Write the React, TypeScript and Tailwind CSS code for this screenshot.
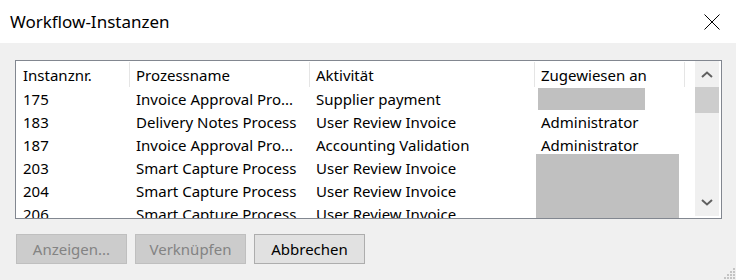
import React from 'react';

type Row = { id: string; process: string; activity: string; assignee?: string; hidden?: boolean };

const rows: Row[] = [
  { id: '175', process: 'Invoice Approval Pro...', activity: 'Supplier payment', hidden: true },
  { id: '183', process: 'Delivery Notes Process', activity: 'User Review Invoice', assignee: 'Administrator' },
  { id: '187', process: 'Invoice Approval Pro...', activity: 'Accounting Validation', assignee: 'Administrator' },
  { id: '203', process: 'Smart Capture Process', activity: 'User Review Invoice' },
  { id: '204', process: 'Smart Capture Process', activity: 'User Review Invoice' },
  { id: '206', process: 'Smart Capture Process', activity: 'User Review Invoice' },
];

function Chevron({ up }: { up?: boolean }) {
  return (
    <svg width="12" height="7" viewBox="0 0 12 7" className="block">
      <path
        d={up ? 'M1 6 L6 1.5 L11 6' : 'M1 1 L6 5.5 L11 1'}
        fill="none"
        stroke="#606060"
        strokeWidth="2"
      />
    </svg>
  );
}

function Grip() {
  const dots = [
    [9, 0], [6, 3], [9, 3], [3, 6], [6, 6], [9, 6], [0, 9], [3, 9], [6, 9], [9, 9],
  ];
  return (
    <svg width="11" height="11" viewBox="0 0 11 11" className="absolute right-[1px] bottom-[1px]">
      {dots.map(([x, y], i) => (
        <rect key={i} x={x} y={y} width="2" height="2" fill="#c4c4c4" />
      ))}
    </svg>
  );
}

export default function App() {
  return (
    <div
      className="relative w-[736px] h-[280px] bg-[#f0f0f0] text-black overflow-hidden"
      style={{ fontFamily: '"Noto Sans", "Open Sans", sans-serif' }}
    >
      {/* title bar */}
      <div className="h-[43px] bg-white flex items-center justify-between pl-[10px] pr-[16px]">
        <span className="text-[17px] leading-none -mt-[1px]">Workflow-Instanzen</span>
        <svg width="16" height="16" viewBox="0 0 16 16" className="block">
          <path d="M0.5 0.5 L15.5 15.5 M15.5 0.5 L0.5 15.5" stroke="#000" strokeWidth="1" />
        </svg>
      </div>

      {/* list */}
      <div className="pl-[15px] pt-[17px]">
        <div className="w-[707px] h-[159px] border border-[#828790] bg-white flex overflow-hidden">
          <div className="relative w-[679px] overflow-hidden text-[15px]">
            <div className="flex h-[27px] items-stretch">
              <div className="w-[114px] pl-[7px] leading-[27px] border-r border-[#e5e5e5] my-[1px]">Instanznr.</div>
              <div className="w-[180px] pl-[6px] leading-[27px] border-r border-[#e5e5e5] my-[1px]">Prozessname</div>
              <div className="w-[225px] pl-[6px] leading-[27px] border-r border-[#e5e5e5] my-[1px]">Aktivität</div>
              <div className="w-[150px] pl-[6px] leading-[27px] border-r border-[#e5e5e5] my-[1px]">Zugewiesen an</div>
            </div>
            {rows.map((r) => (
              <div key={r.id} className="flex h-[23px] leading-[23px] whitespace-nowrap">
                <div className="w-[114px] pl-[7px]">{r.id}</div>
                <div className="w-[180px] pl-[6px] overflow-hidden">{r.process}</div>
                <div className="w-[225px] pl-[6px] overflow-hidden">{r.activity}</div>
                <div className="w-[150px] pl-[6px] overflow-hidden">
                  {r.hidden ? (
                    <div className="ml-[-3px] w-[107px] h-[22px] bg-[#c0c0c0]" />
                  ) : (
                    r.assignee
                  )}
                </div>
              </div>
            ))}
            <div className="absolute left-[520px] top-[93px] w-[143px] h-[70px] bg-[#c0c0c0]" />
          </div>
          <div className="w-[24px] h-[155px] bg-[#f0f0f0] flex flex-col">
            <div className="h-[26px] flex items-center justify-center pt-[1px]">
              <Chevron up />
            </div>
            <div className="h-[26px] bg-[#cdcdcd]" />
            <div className="flex-1" />
            <div className="h-[26px] flex items-center justify-center pb-[2px]">
              <Chevron />
            </div>
          </div>
        </div>
      </div>

      {/* buttons */}
      <div className="flex gap-[8px] pl-[16px] mt-[15px] text-[15px]">
        <button className="w-[111px] h-[30px] bg-[#cccccc] border border-[#bfbfbf] text-[#838383]">Anzeigen...</button>
        <button className="w-[111px] h-[30px] bg-[#cccccc] border border-[#bfbfbf] text-[#838383]">Verknüpfen</button>
        <button className="w-[111px] h-[30px] bg-[#e1e1e1] border border-[#adadad] text-black">Abbrechen</button>
      </div>

      <Grip />
    </div>
  );
}
